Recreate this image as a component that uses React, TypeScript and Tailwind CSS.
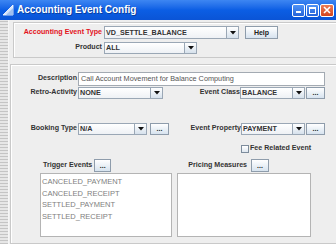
import React from "react";

function Arrow() {
  return (
    <svg width="6" height="4" viewBox="0 0 6 4">
      <path d="M0 0 H6 L3 3.5 Z" fill="#111" />
    </svg>
  );
}

function Combo({ className, value }: { className: string; value: string }) {
  return (
    <div className={`flex border border-[#9aa7b5] bg-gradient-to-b from-[#ffffff] to-[#eef1f5] ${className}`}>
      <div className="flex-1 flex items-center pl-[1px] text-[7.2px] font-bold text-[#333] leading-none overflow-hidden whitespace-nowrap">
        {value}
      </div>
      <div className="w-[12px] flex items-center justify-center border-l border-[#9aa7b5] bg-gradient-to-b from-[#ffffff] to-[#d6e1ec]">
        <Arrow />
      </div>
    </div>
  );
}

function Dots({ className }: { className: string }) {
  return (
    <div
      className={`flex items-end justify-center pb-[2px] border border-[#8e9cab] bg-gradient-to-b from-[#ffffff] to-[#d7e3ef] text-[7px] font-bold text-[#222] leading-none ${className}`}
    >
      ...
    </div>
  );
}

function Label({ className, children, red }: { className: string; children: React.ReactNode; red?: boolean }) {
  return (
    <div
      className={`text-right text-[7.1px] font-bold leading-none whitespace-nowrap ${red ? "text-[#e3121b]" : "text-[#333]"} ${className}`}
    >
      {children}
    </div>
  );
}

export default function App() {
  return (
    <div className="w-[336px] h-[244px] overflow-hidden bg-[#eeeeee] flex flex-col font-['Liberation_Sans',Arial,sans-serif]">
      {/* Title bar */}
      <div className="h-[20px] flex items-center bg-gradient-to-b from-[#3d86f2] via-[#0b5ee4] to-[#0a54d6] shrink-0">
        <svg width="14" height="14" viewBox="0 0 14 14" className="ml-[1px]">
          <path d="M2 12 L12 2 L12 12 Z" fill="#d5e4fb" stroke="#ffffff" strokeWidth="0.8" />
          <path d="M5 12 L12 5 L12 12 Z" fill="#9fc0ef" />
        </svg>
        <div className="ml-[2px] text-white text-[10px] font-bold leading-none [text-shadow:1px_1px_0_#0a3fa0]">
          Accounting Event Config
        </div>
        <div className="ml-auto flex gap-[1px] mr-[2px]">
          <div className="w-[13px] h-[13px] rounded-[2px] border border-white bg-gradient-to-b from-[#4f93f6] to-[#2563d9] flex items-end pl-[3px] pb-[3px]">
            <div className="w-[5px] h-[2px] bg-white" />
          </div>
          <div className="w-[13px] h-[13px] rounded-[2px] border border-white bg-gradient-to-b from-[#4f93f6] to-[#2563d9] flex items-center justify-center">
            <div className="w-[7px] h-[7px] border border-white border-t-2" />
          </div>
          <div className="w-[14px] h-[13px] rounded-[2px] border border-white bg-gradient-to-b from-[#ec7b55] to-[#d2431c] flex items-center justify-center">
            <svg width="8" height="8" viewBox="0 0 8 8">
              <path d="M1 1 L7 7 M7 1 L1 7" stroke="#fff" strokeWidth="1.6" />
            </svg>
          </div>
        </div>
      </div>

      <div className="flex flex-1 min-h-0">
        {/* left strip */}
        <div className="w-[9px] shrink-0 bg-[#dcdcdc] bg-[repeating-linear-gradient(0deg,#c4c4c4_0px,#c4c4c4_1px,#e6e6e6_1px,#e6e6e6_3px)] border-r border-[#f6f6f6]" />

        <div className="flex-1 flex flex-col min-w-0">
          {/* top panel */}
          <div className="ml-[4px] mt-[2px] -mr-[10px] h-[36px] shrink-0 border border-[#c9c9c9] shadow-[inset_1px_1px_0_#ffffff] flex flex-col pt-[3px]">
            <div className="flex items-center h-[13px]">
              <Label red className="w-[88px]">Accounting Event Type</Label>
              <Combo className="ml-[2px] w-[135px] h-[13px]" value="VD_SETTLE_BALANCE" />
              <div className="ml-[6px] w-[33px] h-[13px] border border-[#8e9cab] bg-gradient-to-b from-[#ffffff] to-[#d7e3ef] flex items-center justify-center text-[7px] font-bold text-[#222] leading-none">
                Help
              </div>
            </div>
            <div className="flex items-center h-[12px] mt-[3px]">
              <Label className="w-[88px]">Product</Label>
              <Combo className="ml-[2px] w-[93px] h-[12px]" value="ALL" />
            </div>
          </div>

          {/* main panel */}
          <div className="ml-[1px] mt-[6px] -mr-[10px] flex-1 border border-[#c9c9c9] shadow-[inset_1px_1px_0_#ffffff] flex flex-col pt-[7px]">
            <div className="flex items-center h-[14px]">
              <Label className="w-[66px]">Description</Label>
              <div className="ml-[1px] w-[247px] h-[14px] border border-[#a3aab2] bg-white flex items-center pl-[2px] text-[7.3px] text-[#555] leading-none whitespace-nowrap">
                Call Account Movement for Balance Computing
              </div>
            </div>

            <div className="flex items-center h-[12px] mt-[1px]">
              <Label className="w-[66px]">Retro-Activity</Label>
              <Combo className="ml-[1px] w-[85px] h-[12px]" value="NONE" />
              <Label className="w-[77px]">Event Class</Label>
              <Combo className="w-[65px] h-[12px]" value="BALANCE" />
              <Dots className="ml-[1px] w-[19px] h-[12px]" />
            </div>

            <div className="flex items-center h-[12px] mt-[24px]">
              <Label className="w-[66px]">Booking Type</Label>
              <Combo className="ml-[1px] w-[69px] h-[12px]" value="N/A" />
              <Dots className="ml-[3px] w-[19px] h-[12px]" />
              <Label className="w-[72px]">Event Property</Label>
              <Combo className="w-[64px] h-[12px]" value="PAYMENT" />
              <Dots className="ml-[1px] w-[19px] h-[12px]" />
            </div>

            <div className="flex items-center h-[8px] mt-[10px] ml-[230px]">
              <div className="w-[8px] h-[8px] border border-[#7d8c9c] bg-gradient-to-b from-[#ffffff] to-[#dfe7f0]" />
              <div className="ml-[1px] text-[7.1px] font-bold text-[#333] leading-none whitespace-nowrap">Fee Related Event</div>
            </div>

            <div className="flex items-center h-[13px] mt-[6px]">
              <div className="ml-[32px] text-[7.1px] font-bold text-[#333] leading-none whitespace-nowrap">Trigger Events</div>
              <Dots className="ml-[2px] w-[17px] h-[13px]" />
              <div className="ml-[77px] text-[7.1px] font-bold text-[#333] leading-none whitespace-nowrap">Pricing Measures</div>
              <Dots className="ml-[4px] w-[18px] h-[13px]" />
            </div>

            <div className="flex mt-[1px] h-[64px]">
              <div className="ml-[29px] w-[132px] h-[64px] border border-[#b4b4b4] bg-white pl-[1px] pt-[2px] text-[7.5px] text-[#808080] leading-[11.7px]">
                <div>CANCELED_PAYMENT</div>
                <div>CANCELED_RECEIPT</div>
                <div>SETTLED_PAYMENT</div>
                <div>SETTLED_RECEIPT</div>
              </div>
              <div className="ml-[5px] w-[134px] h-[64px] border border-[#b4b4b4] bg-white" />
            </div>
          </div>
        </div>
      </div>
    </div>
  );
}
